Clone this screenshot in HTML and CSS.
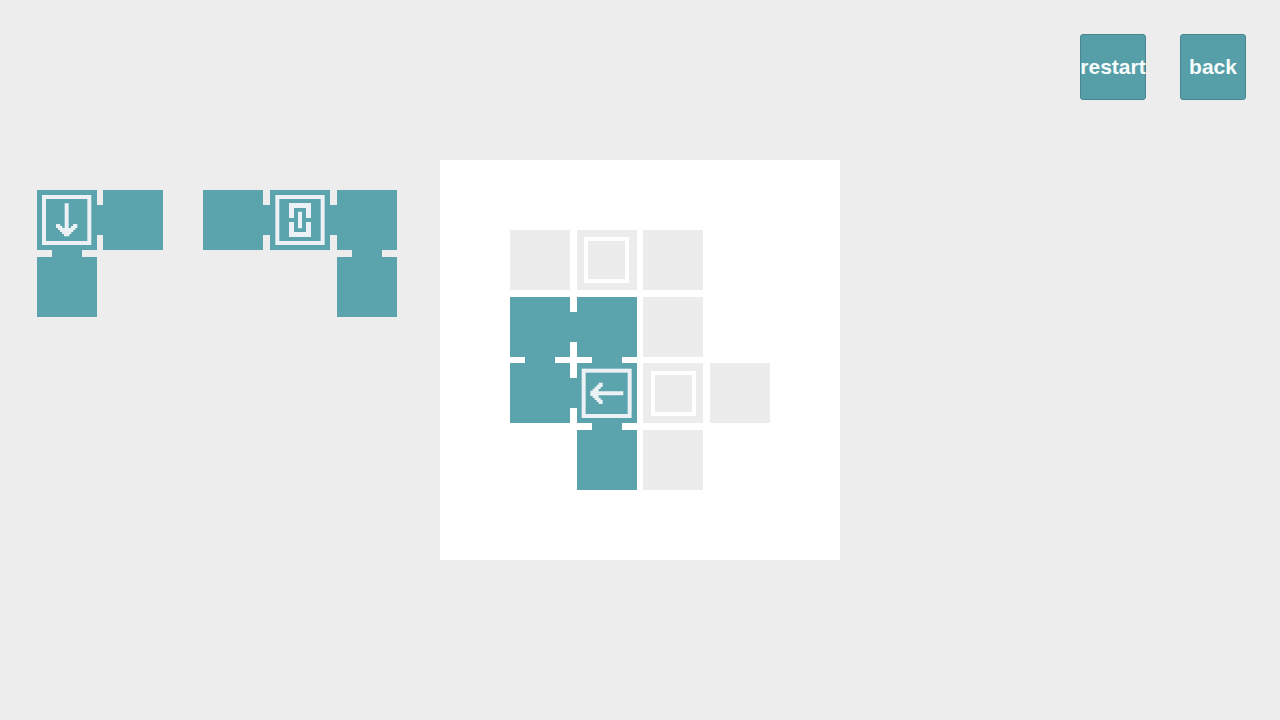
FILE: index.html
```
<!DOCTYPE html>
<html lang="en">
<head>
<meta charset="utf-8">
<meta name="viewport" content="width=device-width, initial-scale=1">
<title>Puzzle</title>
<link rel="stylesheet" href="styles.css">
</head>
<body>
<!-- Drawing unit: one third of a pixel. Cells are 180 wide on a pitch of 200. -->
<svg class="defs" aria-hidden="true">
  <defs>
    <rect id="cell" width="180" height="180"/>
    <rect id="joint-h" x="180" y="45" width="20" height="90"/>
    <rect id="joint-v" x="45" y="180" width="90" height="20"/>
    <rect id="slot" class="slot" x="28" y="28" width="124" height="124"/>
    <rect id="frame" class="frame" x="22" y="21" width="136" height="138"/>
    <path id="arrow" d="M84 40H96V114H103V108H109V102H122V114H116V120H110V126H104V132H98V139H82V132H76V126H70V120H64V114H58V102H71V108H77V114H84Z"/>
  </defs>
</svg>
<main class="game">
  <section class="tray" aria-label="Pieces">
    <svg class="piece piece-small" viewBox="0 0 420 420" role="img" aria-label="Piece with down arrow">
      <g class="teal" transform="translate(20 18)">
        <use href="#cell"/>
        <use href="#cell" x="200"/>
        <use href="#cell" y="200"/>
        <use href="#joint-h"/>
        <use href="#joint-v"/>
      </g>
      <g class="mark" transform="translate(20 18)">
        <use href="#frame"/>
        <use href="#arrow"/>
      </g>
    </svg>
    <svg class="piece piece-wide" viewBox="0 0 630 420" role="img" aria-label="Piece with link">
      <g class="teal" transform="translate(22 18)">
        <use href="#cell"/>
        <use href="#cell" x="200"/>
        <use href="#cell" x="400"/>
        <use href="#cell" x="400" y="200"/>
        <use href="#joint-h"/>
        <use href="#joint-h" x="200"/>
        <use href="#joint-v" x="400"/>
      </g>
      <g class="mark" transform="translate(222 18)">
        <use href="#frame"/>
        <path d="M57 39H123V84H108V54H72V84H57ZM57 96H72V126H108V96H123V141H57ZM84 65H96V115H84Z"/>
      </g>
    </svg>
  </section>
  <section class="panel" aria-label="Board">
    <svg class="board" viewBox="0 0 780 780" role="img" aria-label="Board with one placed piece">
      <g class="empty">
        <use href="#cell"/>
        <use href="#cell" x="200"/>
        <use href="#cell" x="400"/>
        <use href="#cell" x="400" y="200"/>
        <use href="#cell" x="400" y="400"/>
        <use href="#cell" x="600" y="400"/>
        <use href="#cell" x="400" y="600"/>
        <use href="#slot" x="200"/>
        <use href="#slot" x="400" y="400"/>
      </g>
      <g class="teal">
        <use href="#cell" y="200"/>
        <use href="#cell" x="200" y="200"/>
        <use href="#cell" y="400"/>
        <use href="#cell" x="200" y="400"/>
        <use href="#cell" x="200" y="600"/>
        <use href="#joint-h" y="200"/>
        <use href="#joint-h" y="400"/>
        <use href="#joint-v" y="200"/>
        <use href="#joint-v" x="200" y="200"/>
        <use href="#joint-v" x="200" y="400"/>
      </g>
      <g class="mark" transform="translate(200 400) rotate(90 90 90)">
        <use href="#frame"/>
        <use href="#arrow"/>
      </g>
    </svg>
  </section>
  <nav class="actions" aria-label="Game">
    <button class="action" type="button">restart</button>
    <button class="action" type="button">back</button>
  </nav>
</main>
</body>
</html>
```
FILE: styles.css
```
body {
  margin: 0;
  background: #ededed;
  font-family: "Liberation Sans", Arial, sans-serif;
}

.defs {
  display: block;
  width: 0;
  height: 0;
}

.game {
  display: grid;
  grid-template-columns: 1fr auto 1fr;
  min-height: 100vh;
}

.tray {
  display: flex;
  align-items: flex-start;
  gap: 26px;
  padding: 184px 0 0 30px;
}

.piece {
  display: block;
  flex: none;
}

.piece-small {
  width: 140px;
}

.piece-wide {
  width: 210px;
}

.panel {
  align-self: center;
  padding: 70px;
  background: #ffffff;
}

.board {
  display: block;
  width: 260px;
}

.teal {
  fill: #5ba4ad;
  shape-rendering: crispEdges;
}

.empty {
  fill: #ececec;
  shape-rendering: crispEdges;
}

.mark {
  fill: #ebf1f4;
}

.frame {
  fill: none;
  stroke: #ebf1f4;
  stroke-width: 12px;
}

.slot {
  fill: none;
  stroke: #ffffff;
  stroke-width: 12px;
}

.actions {
  display: flex;
  align-items: flex-start;
  justify-content: flex-end;
  gap: 34px;
  padding: 34px;
}

.action {
  display: flex;
  align-items: center;
  justify-content: center;
  box-sizing: border-box;
  width: 66px;
  height: 66px;
  padding: 0;
  border: 1px solid #488791;
  border-radius: 3px;
  background: #569ea8;
  color: #f7fdfc;
  font: bold 21px "Liberation Sans", Arial, sans-serif;
  cursor: pointer;
}
```
